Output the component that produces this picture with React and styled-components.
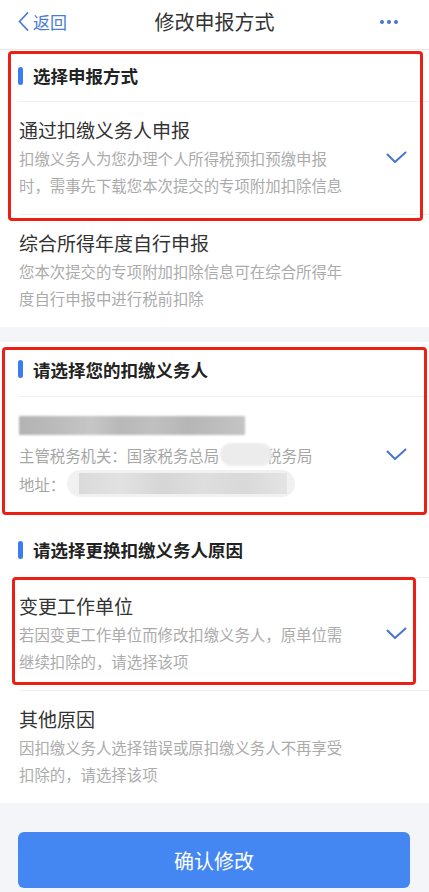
import React from "react";
import styled, { createGlobalStyle } from "styled-components";

const GlobalStyle = createGlobalStyle`
  html, body {
    margin: 0;
    padding: 0;
    background: #f3f5f8;
  }
  body {
    font-family: "Noto Sans CJK SC", "Noto Sans", sans-serif;
    -webkit-font-smoothing: antialiased;
  }
  * {
    box-sizing: border-box;
  }
`;

const Page = styled.div`
    width: 429px;
    min-height: 892px;
    background: #f3f5f8;
    display: flex;
    flex-direction: column;
`;

const NavBar = styled.header`
    height: 50px;
    background: #ffffff;
    border-bottom: 1px solid #e6e7ea;
    display: grid;
    grid-template-columns: 100px 1fr 100px;
    align-items: center;
    padding: 0 18px 6px;
`;

const BackLink = styled.div`
    display: flex;
    align-items: center;
    gap: 4px;
    color: #4a7bd6;
    font-size: 17px;
`;

const NavTitle = styled.div`
    text-align: center;
    font-size: 20px;
    color: #333333;
`;

const MoreDots = styled.div`
    justify-self: end;
    margin-right: 13px;
    display: flex;
    gap: 3px;

    span {
        width: 4px;
        height: 4px;
        border-radius: 50%;
        background: #4a74cf;
    }
`;

const Card = styled.section`
    background: #ffffff;
`;

const Gap = styled.div`
    height: ${p => p.$h}px;
`;

const SectionHeader = styled.div`
    height: ${p => p.$h}px;
    padding-top: ${p => p.$top || 0}px;
    margin-left: 18px;
    display: flex;
    align-items: center;
    gap: 10px;
    font-size: 17.5px;
    font-weight: 700;
    color: #222222;
    border-bottom: 1px solid #eef0f3;
`;

const Bar = styled.i`
    width: 5px;
    height: 18px;
    border-radius: 3px;
    background: #3b7cf0;
`;

const Marked = styled.div`
    position: relative;
`;

const Frame = styled.div`
    position: absolute;
    top: ${p => p.$t}px;
    left: ${p => p.$l}px;
    right: ${p => p.$r}px;
    bottom: ${p => p.$b}px;
    border: 3px solid #ec1f17;
    border-radius: 4px;
    pointer-events: none;
    z-index: 2;
`;

const Option = styled.div`
    display: flex;
    align-items: center;
    margin-left: 19px;
    padding: ${p => p.$pad || "13px 22px 15px 0"};
    border-bottom: ${p => (p.$last ? "none" : "1px solid #eef0f3")};
`;

const OptionBody = styled.div`
    width: 332px;
`;

const OptionTitle = styled.div`
    font-size: 19px;
    line-height: 30px;
    color: #333333;
`;

const OptionDesc = styled.div`
    font-size: 15.4px;
    line-height: 27px;
    color: #ababab;
`;

const InfoLine = styled.div`
    display: flex;
    align-items: center;
    height: 29px;
    font-size: 15.4px;
    color: #a6a6a6;
    white-space: nowrap;
`;

const NameBlur = styled.span`
    display: block;
    width: 226px;
    height: 19px;
    background: linear-gradient(
        90deg,
        #b3b3b3 0%, #bcbcbc 18%, #c6c6c6 32%, #b8b8b8 45%,
        #c0c0c0 60%, #b6b6b6 75%, #c4c4c4 100%
    );
    filter: blur(0.8px);
`;

const Smudge = styled.span`
    position: relative;
    z-index: 1;
    display: inline-block;
    width: 52px;
    height: 23px;
    margin: 0 -6px 0 1px;
    border-radius: 12px;
    background: #ececec;
    filter: blur(1px);
`;

const AddressBlur = styled.span`
    display: inline-block;
    width: 228px;
    height: 27px;
    margin-left: 2px;
    border-radius: 14px;
    background: #f1f1f1;
    padding: 3px 8px 3px 12px;
    filter: blur(0.6px);

    &::before {
        content: "";
        display: block;
        height: 100%;
        background: linear-gradient(
            90deg,
            #dadada 0%, #e2e2e2 20%, #d6d6d6 40%, #dedede 60%, #d9d9d9 80%, #e4e4e4 100%
        );
    }
`;

const CheckMark = styled.svg`
    margin-left: auto;
    flex-shrink: 0;
`;

const Footer = styled.div`
    padding: 29px 19px 5px 18px;
`;

const ConfirmButton = styled.button`
    width: 100%;
    height: 56px;
    border: none;
    border-radius: 6px;
    background: #4487f3;
    color: #ffffff;
    font-family: inherit;
    font-size: 20px;
`;

const Check = () => (
    <CheckMark width="21" height="13" viewBox="0 0 21 13">
        <polyline points="1.5,3.5 9,11 19.5,1.5" fill="none" stroke="#4a74cf" strokeWidth="2" strokeLinecap="round" strokeLinejoin="round" />
    </CheckMark>
);

const App = () => {
    return (
        <Page>
            <GlobalStyle />
            <NavBar>
                <BackLink>
                    <svg width="11" height="19" viewBox="0 0 11 19">
                        <polyline points="9.5,1 1.5,9.5 9.5,18" fill="none" stroke="#4a7bd6" strokeWidth="1.8" strokeLinecap="round" strokeLinejoin="round" />
                    </svg>
                    返回
                </BackLink>
                <NavTitle>修改申报方式</NavTitle>
                <MoreDots><span /><span /><span /></MoreDots>
            </NavBar>

            <Card>
                <Marked>
                    <SectionHeader $h={52}><Bar />选择申报方式</SectionHeader>
                    <Option>
                        <OptionBody>
                            <OptionTitle>通过扣缴义务人申报</OptionTitle>
                            <OptionDesc>扣缴义务人为您办理个人所得税预扣预缴申报时，需事先下载您本次提交的专项附加扣除信息</OptionDesc>
                        </OptionBody>
                        <Check />
                    </Option>
                    <Frame $t={1} $l={8} $r={6} $b={-6} />
                </Marked>
                <Option $last>
                    <OptionBody>
                        <OptionTitle>综合所得年度自行申报</OptionTitle>
                        <OptionDesc>您本次提交的专项附加扣除信息可在综合所得年度自行申报中进行税前扣除</OptionDesc>
                    </OptionBody>
                </Option>
            </Card>

            <Gap $h={15} />

            <Card>
                <Marked>
                    <SectionHeader $h={55}><Bar />请选择您的扣缴义务人</SectionHeader>
                    <Option $last $pad="14px 22px 10px 0">
                        <OptionBody>
                            <InfoLine><NameBlur /></InfoLine>
                            <InfoLine>主管税务机关：国家税务总局<Smudge />税务局</InfoLine>
                            <InfoLine>地址：<AddressBlur /></InfoLine>
                        </OptionBody>
                        <Check />
                    </Option>
                    <Frame $t={5} $l={2} $r={2} $b={-7} />
                </Marked>

                <SectionHeader $h={70} $top={14}><Bar />请选择更换扣缴义务人原因</SectionHeader>
                <Marked>
                    <Option>
                        <OptionBody>
                            <OptionTitle>变更工作单位</OptionTitle>
                            <OptionDesc>若因变更工作单位而修改扣缴义务人，原单位需继续扣除的，请选择该项</OptionDesc>
                        </OptionBody>
                        <Check />
                    </Option>
                    <Frame $t={-1} $l={12} $r={13} $b={6} />
                </Marked>
                <Option $last>
                    <OptionBody>
                        <OptionTitle>其他原因</OptionTitle>
                        <OptionDesc>因扣缴义务人选择错误或原扣缴义务人不再享受扣除的，请选择该项</OptionDesc>
                    </OptionBody>
                </Option>
            </Card>

            <Footer>
                <ConfirmButton>确认修改</ConfirmButton>
            </Footer>
        </Page>
    );
};

export default App;
